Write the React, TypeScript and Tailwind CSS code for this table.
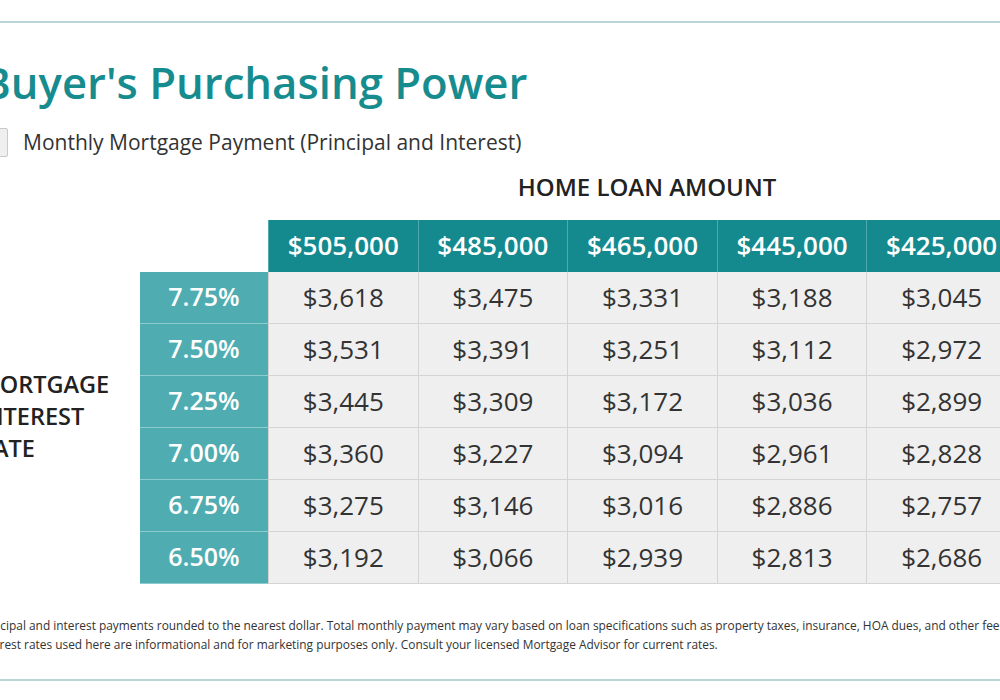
import React from "react";

const loans = ["$505,000", "$485,000", "$465,000", "$445,000", "$425,000"];

const rows: { rate: string; payments: string[] }[] = [
  { rate: "7.75%", payments: ["$3,618", "$3,475", "$3,331", "$3,188", "$3,045"] },
  { rate: "7.50%", payments: ["$3,531", "$3,391", "$3,251", "$3,112", "$2,972"] },
  { rate: "7.25%", payments: ["$3,445", "$3,309", "$3,172", "$3,036", "$2,899"] },
  { rate: "7.00%", payments: ["$3,360", "$3,227", "$3,094", "$2,961", "$2,828"] },
  { rate: "6.75%", payments: ["$3,275", "$3,146", "$3,016", "$2,886", "$2,757"] },
  { rate: "6.50%", payments: ["$3,192", "$3,066", "$2,939", "$2,813", "$2,686"] },
];

export default function App() {
  return (
    <div className="w-[1000px] h-[700px] overflow-hidden bg-white font-['Open_Sans',sans-serif] text-[#333]">
      <div className="mt-[21px] h-[2px] bg-[#b9d5d9]" />
      <div className="ml-[-22px] w-[1060px]">
        <h1 className="mt-[38px] pl-[4px] text-[43.7px] leading-none font-semibold text-[#178c8f]">
          Buyer's Purchasing Power
        </h1>
        <div className="mt-[23px] flex items-center gap-[15px]">
          <div className="w-[30px] h-[29px] bg-[#efefef] border border-[#c9c9c9] rounded-[2px]" />
          <span className="text-[21px] leading-none">
            Monthly Mortgage Payment (Principal and Interest)
          </span>
        </div>
        <div className="mt-[18px] pl-[300px] w-[1038px] text-center text-[24px] leading-none font-semibold text-[#222]">
          HOME LOAN AMOUNT
        </div>
        <div className="mt-[21px] flex">
          <div className="w-[162px] flex flex-col pt-[148px] text-[23.5px] leading-[32px] font-semibold text-[#222]">
            <span>MORTGAGE</span>
            <span>INTEREST</span>
            <span>RATE</span>
          </div>
          <div className="grid grid-cols-[128px_repeat(5,149.6px)]">
            <div />
            {loans.map((loan) => (
              <div
                key={loan}
                className="h-[52px] flex items-center justify-center bg-[#148a8e] border-l border-[#4fa9ad] text-white text-[26px] font-semibold"
              >
                {loan}
              </div>
            ))}
            {rows.map((row) => (
              <React.Fragment key={row.rate}>
                <div className="h-[52px] flex items-center justify-center bg-[#4fadb2] border-b border-[#8ccbce] text-white text-[25px] font-semibold">
                  {row.rate}
                </div>
                {row.payments.map((p, i) => (
                  <div
                    key={i}
                    className="h-[52px] flex items-center justify-center bg-[#efefef] border-l border-b border-[#d4d4d4] text-[26px] text-[#333]"
                  >
                    {p}
                  </div>
                ))}
              </React.Fragment>
            ))}
          </div>
        </div>
        <div className="mt-[32px] text-[11.9px] leading-[19px] text-[#333] whitespace-nowrap">
          <p>
            Principal and interest payments rounded to the nearest dollar. Total monthly payment may vary based on loan specifications such as property taxes, insurance, HOA dues, and other fees.
          </p>
          <p>
            Interest rates used here are informational and for marketing purposes only. Consult your licensed Mortgage Advisor for current rates.
          </p>
        </div>
      </div>
      <div className="mt-[25px] h-[2px] bg-[#b9d5d9]" />
    </div>
  );
}
